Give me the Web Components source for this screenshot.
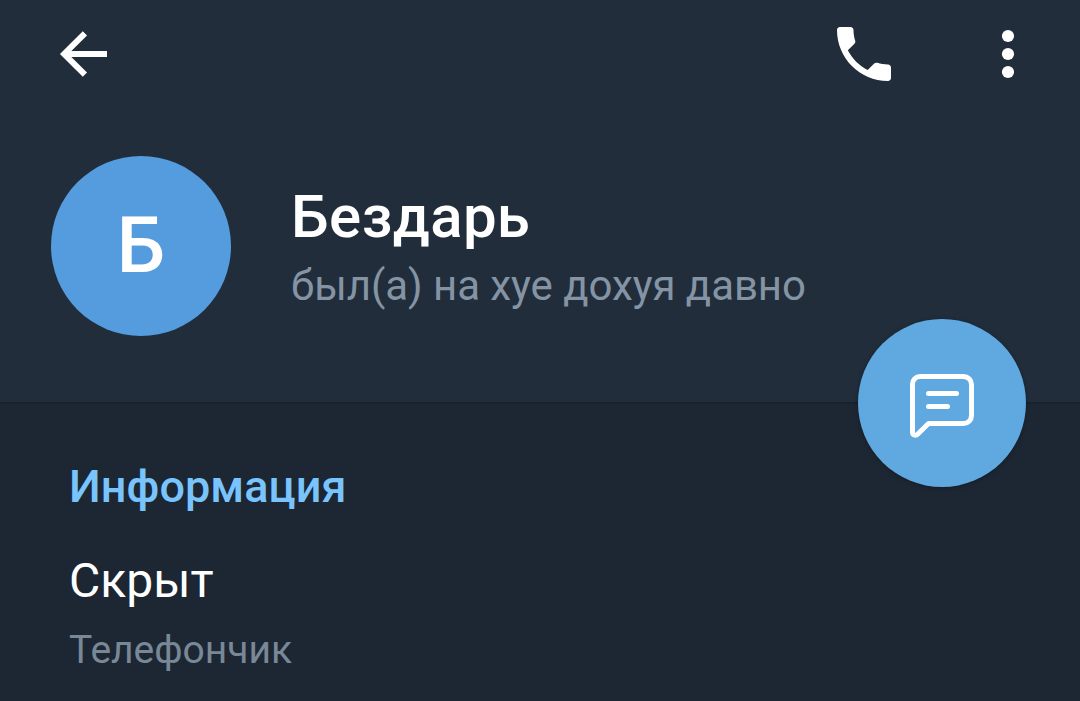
<!DOCTYPE html>
<html lang="ru">
<head>
<meta charset="utf-8">
<title>Профиль</title>
<style>
    body {
        margin: 0;
        background: #1d2733;
        font-family: Roboto, "Noto Sans", sans-serif;
    }
</style>
</head>
<body>
<profile-page>
    <profile-toolbar slot="header"></profile-toolbar>
    <profile-card slot="header" initial="Б">
        <span slot="name">Бездарь</span>
        <span slot="status">был(а) на хуе дохуя давно</span>
    </profile-card>
    <message-button slot="action"></message-button>
    <info-section>
        <span slot="title">Информация</span>
        <info-row>
            <span slot="value">Скрыт</span>
            <span slot="label">Телефончик</span>
        </info-row>
    </info-section>
</profile-page>

<script>
/**
 * profile-page
 * Header block on top, details below, floating action over the seam.
 */
class ProfilePage extends HTMLElement {
    constructor() {
        super();
        this.attachShadow({ mode: 'open' });
    }

    connectedCallback() {
        this.shadowRoot.innerHTML = `
            <style>
                :host {
                    display: block;
                    height: 701px;
                    overflow: hidden;
                    background: #1d2733;
                }
                header {
                    position: relative;
                    box-sizing: border-box;
                    height: 402px;
                    background: #212d3b;
                    box-shadow: 0 1px 2px rgba(0, 0, 0, 0.25);
                }
                .action {
                    position: absolute;
                    right: 54px;
                    bottom: -85px;
                }
            </style>
            <header>
                <slot name="header"></slot>
                <div class="action"><slot name="action"></slot></div>
            </header>
            <main><slot></slot></main>
        `;
    }
}

/**
 * profile-toolbar
 * Back, call and overflow menu buttons.
 */
class ProfileToolbar extends HTMLElement {
    constructor() {
        super();
        this.attachShadow({ mode: 'open' });
    }

    connectedCallback() {
        this.shadowRoot.innerHTML = `
            <style>
                :host {
                    display: flex;
                    align-items: center;
                    justify-content: space-between;
                    box-sizing: border-box;
                    height: 108px;
                    padding: 0 36px 0 48px;
                }
                .actions {
                    display: flex;
                    gap: 72px;
                }
                button {
                    display: block;
                    padding: 0;
                    border: none;
                    background: transparent;
                    color: #fff;
                    cursor: pointer;
                }
                svg {
                    display: block;
                    width: 72px;
                    height: 72px;
                }
            </style>
            <button aria-label="Назад">
                <svg viewBox="0 0 72 72" fill="none" stroke="currentColor" stroke-width="6">
                    <path d="M59 36H16M36.9 15.3L16.2 36l20.7 20.7"/>
                </svg>
            </button>
            <div class="actions">
                <button aria-label="Позвонить">
                    <svg viewBox="0 0 24 24" fill="currentColor">
                        <path d="M20 15.5c-1.25 0-2.45-.2-3.57-.57-.35-.11-.74-.03-1.02.24l-2.2 2.2c-2.83-1.44-5.15-3.75-6.59-6.59l2.2-2.21c.28-.26.36-.65.25-1C8.7 6.45 8.5 5.25 8.5 4c0-.55-.45-1-1-1H4c-.55 0-1 .45-1 1 0 9.39 7.61 17 17 17 .55 0 1-.45 1-1v-3.5c0-.55-.45-1-1-1z"/>
                    </svg>
                </button>
                <button aria-label="Меню">
                    <svg viewBox="0 0 72 72" fill="currentColor">
                        <circle cx="36" cy="18" r="6.1"/>
                        <circle cx="36" cy="36" r="6.1"/>
                        <circle cx="36" cy="54" r="6.1"/>
                    </svg>
                </button>
            </div>
        `;
    }
}

/**
 * profile-card
 * Round avatar with the initial, name and last seen status.
 */
class ProfileCard extends HTMLElement {
    constructor() {
        super();
        this.attachShadow({ mode: 'open' });
    }

    connectedCallback() {
        this.shadowRoot.innerHTML = `
            <style>
                :host {
                    display: flex;
                    gap: 60px;
                    padding: 48px 51px 0;
                }
                .avatar {
                    display: flex;
                    align-items: center;
                    justify-content: center;
                    flex: none;
                    width: 180px;
                    height: 180px;
                    border-radius: 50%;
                    background: #549cdd;
                    color: #fff;
                    font-size: 77px;
                    font-weight: 500;
                    line-height: 180px;
                }
                .text {
                    padding-top: 26px;
                    white-space: nowrap;
                }
                .name {
                    color: #fff;
                    font-size: 60px;
                    font-weight: 500;
                    letter-spacing: 0.4px;
                    line-height: 70px;
                }
                .status {
                    margin-top: 9px;
                    color: #8494a4;
                    font-size: 42px;
                    letter-spacing: -0.06px;
                    line-height: 50px;
                }
            </style>
            <div class="avatar">${this.getAttribute('initial')}</div>
            <div class="text">
                <div class="name"><slot name="name"></slot></div>
                <div class="status"><slot name="status"></slot></div>
            </div>
        `;
    }
}

class MessageButton extends HTMLElement {
    constructor() {
        super();
        this.attachShadow({ mode: 'open' });
    }

    connectedCallback() {
        this.shadowRoot.innerHTML = `
            <style>
                :host {
                    display: block;
                }
                button {
                    display: flex;
                    align-items: center;
                    justify-content: center;
                    width: 168px;
                    height: 168px;
                    padding: 0;
                    border: none;
                    border-radius: 50%;
                    background: #5fa8e0;
                    box-shadow: 0 1px 4px rgba(0, 0, 0, 0.3);
                    color: #fff;
                    cursor: pointer;
                }
                svg {
                    width: 72px;
                    height: 72px;
                }
            </style>
            <button aria-label="Написать">
                <svg viewBox="0 0 72 72" fill="none" stroke="currentColor" stroke-width="5" stroke-linecap="round" stroke-linejoin="round">
                    <path d="M14 9.5h43.5a8 8 0 0 1 8 8v31a8 8 0 0 1-8 8H22.5L11.6 67.2c-2 2-5.1.8-5.1-2V17a7.5 7.5 0 0 1 7.5-7.5z"/>
                    <path d="M22.5 26.5h28M22.5 39.5h19"/>
                </svg>
            </button>
        `;
    }
}

/**
 * info-section
 * Titled list of info rows.
 */
class InfoSection extends HTMLElement {
    constructor() {
        super();
        this.attachShadow({ mode: 'open' });
    }

    connectedCallback() {
        this.shadowRoot.innerHTML = `
            <style>
                :host {
                    display: block;
                    padding: 58px 69px 0;
                }
                .title {
                    margin-bottom: 39px;
                    color: #79c4fc;
                    font-size: 45px;
                    font-weight: 500;
                    letter-spacing: 0.06px;
                    line-height: 54px;
                }
            </style>
            <div class="title"><slot name="title"></slot></div>
            <slot></slot>
        `;
    }
}

/**
 * info-row
 * A value with its caption underneath.
 */
class InfoRow extends HTMLElement {
    constructor() {
        super();
        this.attachShadow({ mode: 'open' });
    }

    connectedCallback() {
        this.shadowRoot.innerHTML = `
            <style>
                :host {
                    display: flex;
                    flex-direction: column;
                    gap: 18px;
                }
                .value {
                    color: #fff;
                    font-size: 48px;
                    line-height: 56px;
                }
                .label {
                    color: #798897;
                    font-size: 39px;
                    line-height: 46px;
                }
            </style>
            <div class="value"><slot name="value"></slot></div>
            <div class="label"><slot name="label"></slot></div>
        `;
    }
}

customElements.define('profile-page', ProfilePage);
customElements.define('profile-toolbar', ProfileToolbar);
customElements.define('profile-card', ProfileCard);
customElements.define('message-button', MessageButton);
customElements.define('info-section', InfoSection);
customElements.define('info-row', InfoRow);
</script>
</body>
</html>
